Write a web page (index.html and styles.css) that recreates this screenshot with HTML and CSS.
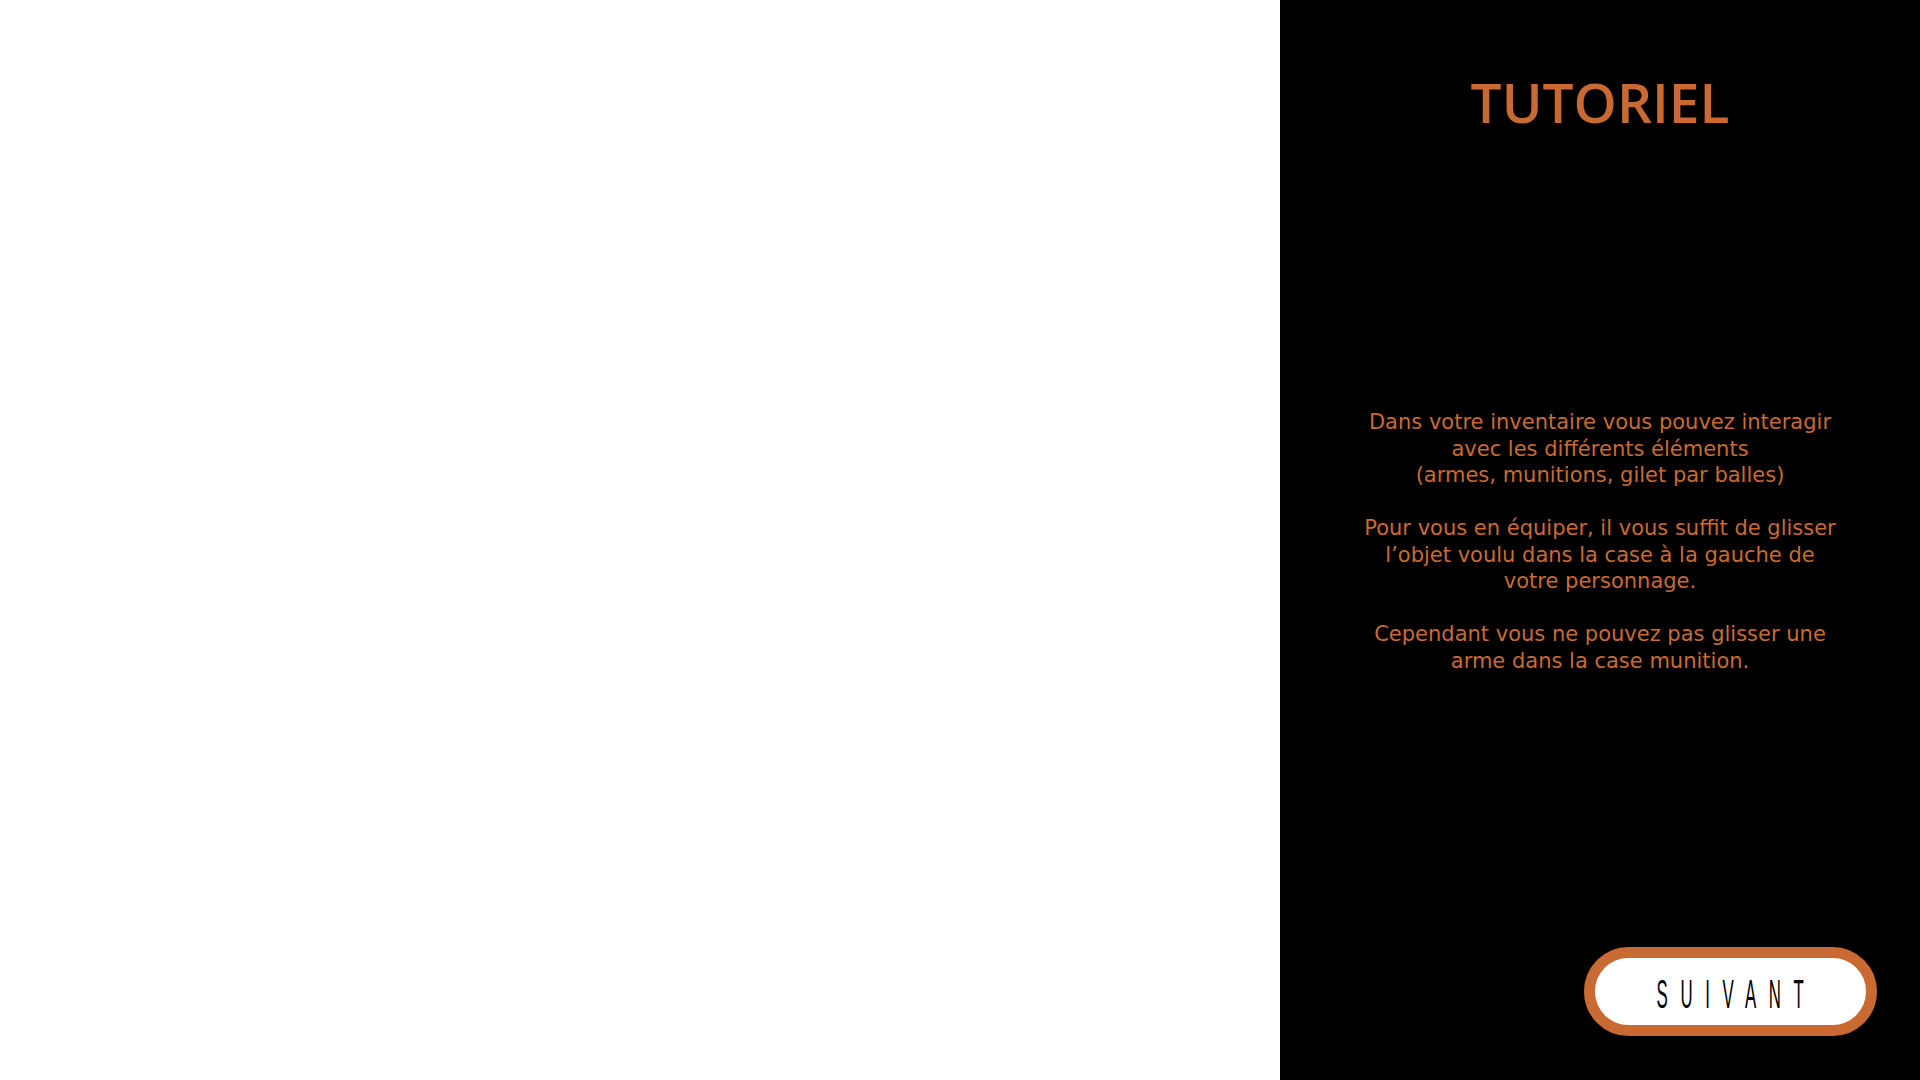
FILE: index.html
```html
<!DOCTYPE html>
<html lang="fr">
<head>
<meta charset="utf-8">
<title>Tutoriel</title>
<link rel="stylesheet" href="styles.css">
</head>
<body>
<div class="page">
  <div class="stage"></div>
  <aside class="panel">
    <h1 class="title">TUTORIEL</h1>
    <div class="text">
      <p>Dans votre inventaire vous pouvez interagir<br>avec les différents éléments<br>(armes, munitions, gilet par balles)</p>
      <p>Pour vous en équiper, il vous suffit de glisser<br>l’objet voulu dans la case à la gauche de<br>votre personnage.</p>
      <p>Cependant vous ne pouvez pas glisser une<br>arme dans la case munition.</p>
    </div>
    <button class="next"><span class="next-label">SUIVANT</span></button>
  </aside>
</div>
</body>
</html>
```

FILE: styles.css
```css
html, body {
  margin: 0;
  padding: 0;
  width: 1920px;
  height: 1080px;
  overflow: hidden;
  background: #ffffff;
}
.page {
  display: flex;
  width: 1920px;
  height: 1080px;
}
.stage {
  width: 1280px;
  height: 100%;
  background: #ffffff;
}
.panel {
  width: 640px;
  height: 100%;
  background: #000000;
  display: flex;
  flex-direction: column;
  align-items: center;
  box-sizing: border-box;
  padding-top: 74px;
  padding-bottom: 44px;
}
.title {
  margin: 0;
  font-family: "Open Sans", "Noto Sans", sans-serif;
  font-weight: 600;
  font-size: 55px;
  line-height: 56px;
  color: #c96a33;
  letter-spacing: 0;
}
.text {
  margin-top: 279px;
  text-align: center;
  font-family: "DejaVu Sans", sans-serif;
  font-size: 21px;
  line-height: 26.5px;
  color: #c96a33;
}
.text p {
  margin: 0 0 26.5px 0;
}
.next {
  margin-top: auto;
  align-self: flex-end;
  margin-right: 43px;
  width: 293px;
  height: 89px;
  box-sizing: border-box;
  border: 11px solid #c96a33;
  border-radius: 45px;
  background: #ffffff;
  padding: 4px 0 0 0;
  display: flex;
  align-items: center;
  justify-content: center;
  overflow: hidden;
}
.next-label {
  font-family: "Liberation Sans Narrow", "Liberation Sans", sans-serif;
  font-weight: 400;
  font-size: 40px;
  line-height: 40px;
  color: #000000;
  letter-spacing: 30px;
  padding-left: 30px;
  display: inline-block;
  white-space: nowrap;
  transform: scaleX(0.42);
}
```
